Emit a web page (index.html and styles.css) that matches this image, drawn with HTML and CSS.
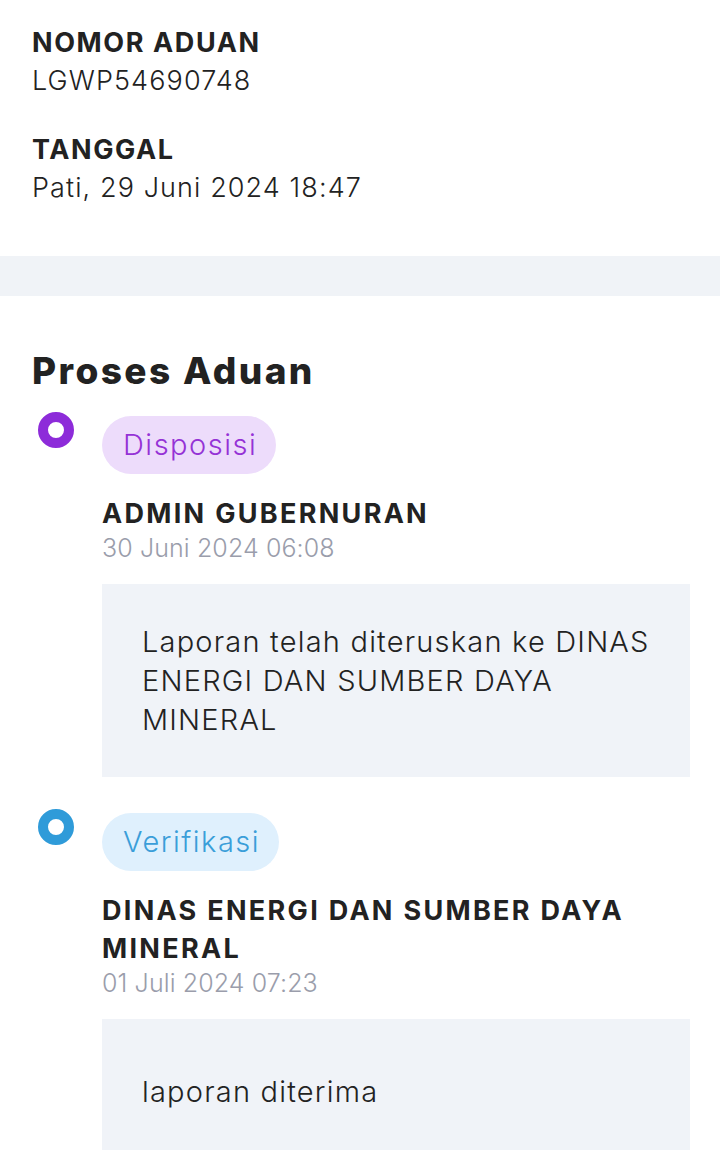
FILE: index.html
```html
<!DOCTYPE html>
<html lang="id">
<head>
<meta charset="UTF-8">
<meta name="viewport" content="width=device-width, initial-scale=1.0">
<title>Detail Aduan</title>
<link rel="stylesheet" href="styles.css">
</head>
<body>

<div class="info">
  <div class="field">
    <div class="label">NOMOR ADUAN</div>
    <div class="value">LGWP54690748</div>
  </div>
  <div class="field">
    <div class="label">TANGGAL</div>
    <div class="value">Pati, 29 Juni 2024 18:47</div>
  </div>
</div>

<div class="divider"></div>

<div class="process">
  <h2>Proses Aduan</h2>

  <div class="step">
    <div class="dot purple"></div>
    <div class="step-body">
      <span class="badge purple">Disposisi</span>
      <div class="actor">ADMIN GUBERNURAN</div>
      <div class="date">30 Juni 2024 06:08</div>
      <div class="note">Laporan telah diteruskan ke DINAS ENERGI DAN SUMBER DAYA MINERAL</div>
    </div>
  </div>

  <div class="step">
    <div class="dot blue"></div>
    <div class="step-body">
      <span class="badge blue">Verifikasi</span>
      <div class="actor">DINAS ENERGI DAN SUMBER DAYA MINERAL</div>
      <div class="date">01 Juli 2024 07:23</div>
      <div class="note">laporan diterima</div>
    </div>
  </div>
</div>

</body>
</html>
```

FILE: styles.css
```css
body {
  margin: 0;
  font-family: Inter, "Noto Sans", sans-serif;
  color: #222;
  background-color: #fff;
}

.info {
  padding: 24px 32px 49px;
}

.field {
  margin-bottom: 31px;
}

.field:last-child {
  margin-bottom: 0;
}

.label {
  font-size: 27px;
  font-weight: 700;
  line-height: 38px;
  letter-spacing: 1.6px;
}

.value {
  font-size: 27px;
  font-weight: 300;
  line-height: 38px;
  letter-spacing: 1.1px;
}

.divider {
  height: 40px;
  background-color: #f0f3f7;
}

.process {
  padding: 50px 30px 0 32px;
}

.process h2 {
  margin: 0 0 20px;
  font-size: 37px;
  font-weight: 800;
  line-height: 50px;
  letter-spacing: 2.4px;
}

.step {
  display: flex;
  gap: 28px;
  margin-bottom: 36px;
}

.dot {
  width: 36px;
  height: 36px;
  border-radius: 50%;
  flex-shrink: 0;
  box-sizing: border-box;
  border: 10px solid;
  margin-top: -4px;
  margin-left: 6px;
  background-color: #fff;
}

.dot.purple {
  border-color: #8d2bd9;
}

.dot.blue {
  border-color: #2f9bd9;
}

.step-body {
  flex: 1;
  min-width: 0;
}

.badge {
  display: inline-block;
  padding: 0 19px 0 21px;
  height: 58px;
  line-height: 58px;
  border-radius: 29px;
  font-size: 29px;
  font-weight: 300;
  letter-spacing: 1.5px;
}

.badge.purple {
  background-color: #eddcfb;
  color: #9532d6;
}

.badge.blue {
  background-color: #dff0fd;
  color: #3a9ed9;
}

.actor {
  margin-top: 21px;
  font-size: 27px;
  font-weight: 700;
  line-height: 38px;
  letter-spacing: 2.3px;
}

.date {
  font-size: 25px;
  font-weight: 300;
  line-height: 30px;
  letter-spacing: 0.1px;
  color: #9a9dab;
}

.note {
  display: flex;
  align-items: center;
  box-sizing: border-box;
  min-height: 144px;
  margin-top: 21px;
  padding: 38px 36px 38px 40px;
  background-color: #f0f3f8;
  font-size: 29px;
  font-weight: 300;
  line-height: 39px;
  letter-spacing: 1.2px;
  color: #222;
}
```
